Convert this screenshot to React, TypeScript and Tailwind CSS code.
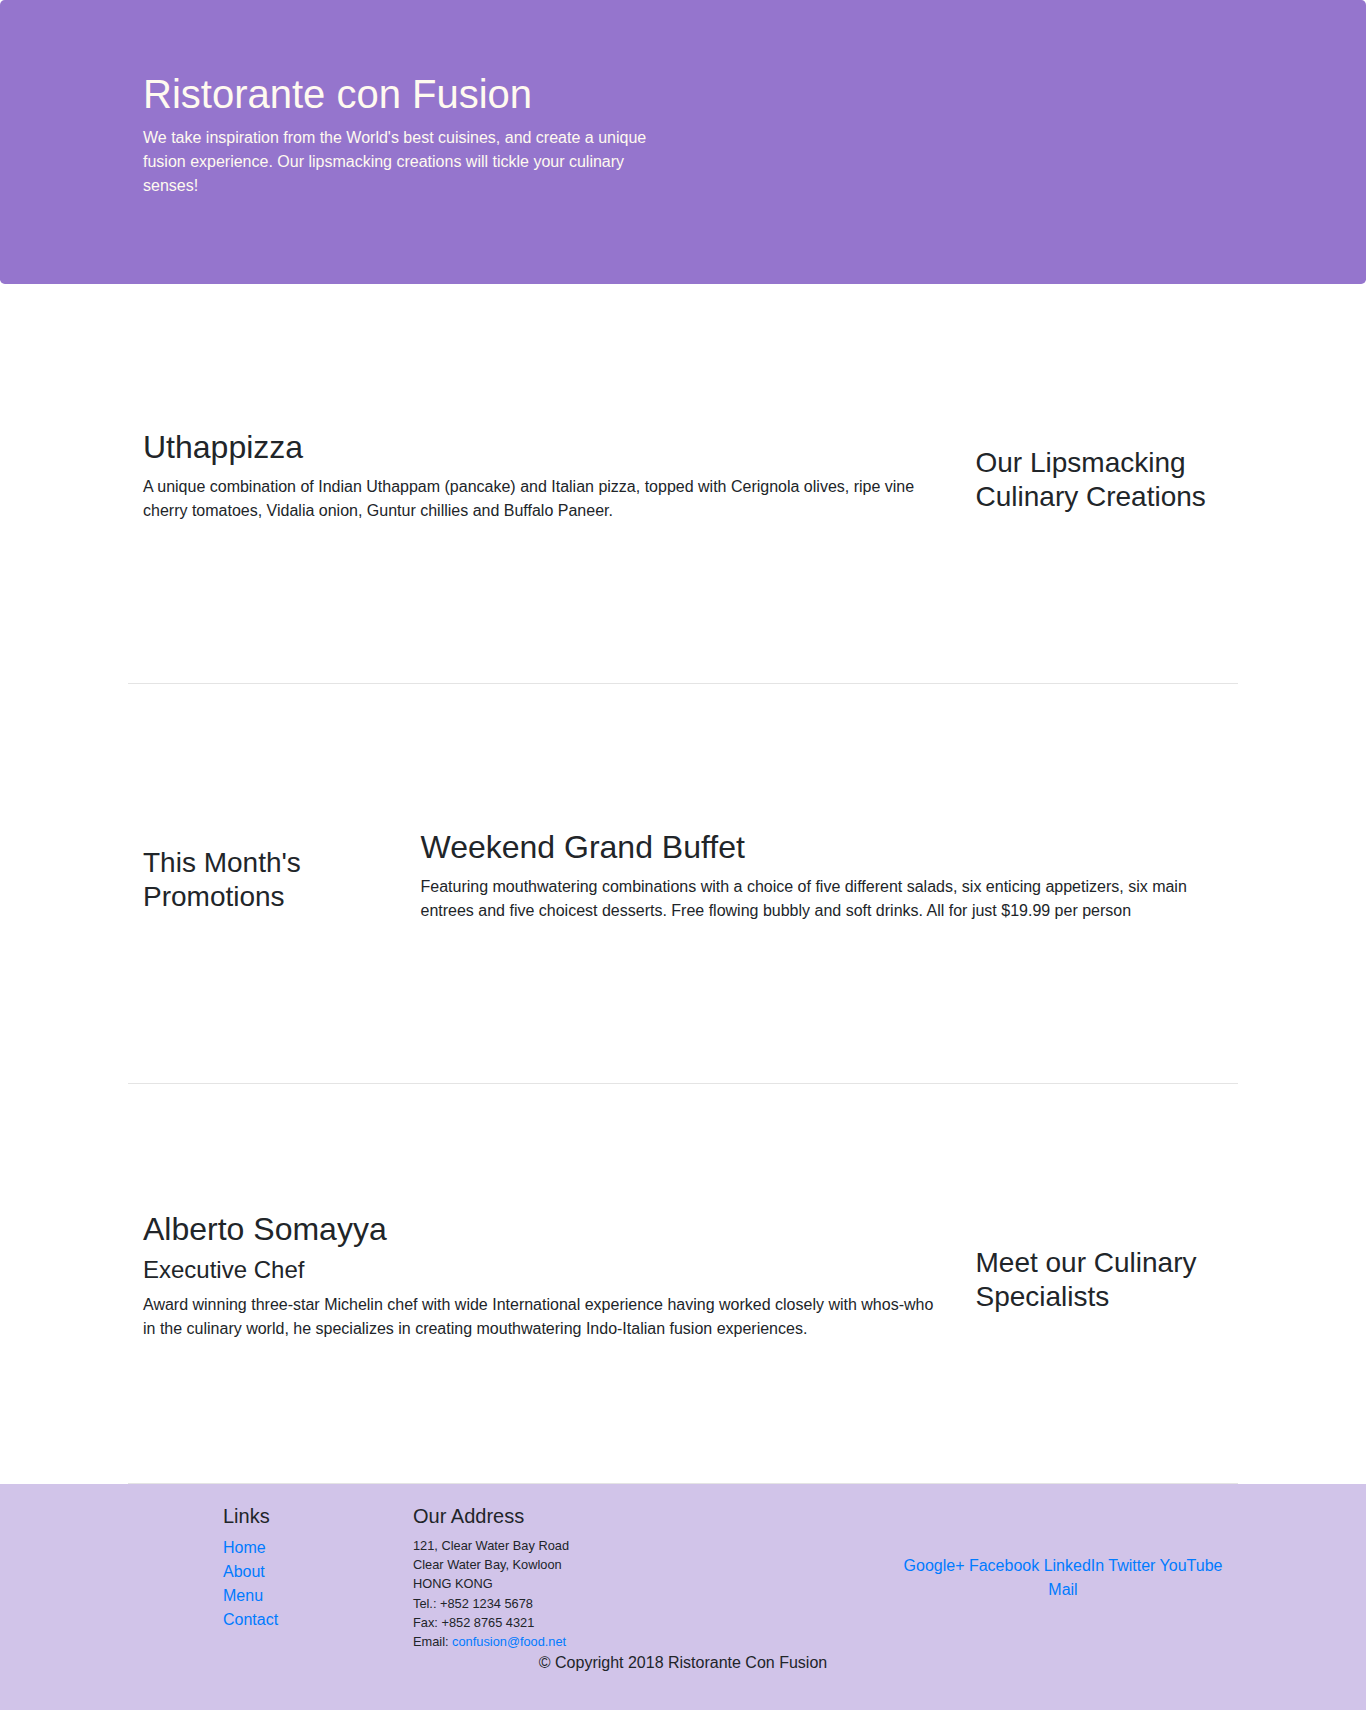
import React from "react";

export default function App() {
  return (
    <div className="font-[family-name:'Liberation_Sans',Arial,sans-serif] text-[#212529] text-[16px] leading-[24px] bg-white">
      <header className="bg-[#9575cd] text-[#fffaf0] rounded-[4.8px] pt-[70px] pb-[70px] px-[30px]">
        <div className="mx-auto w-[1140px] px-[15px]">
          <div className="flex">
            <div className="w-1/2 px-[15px]">
              <h1 className="text-[40px] leading-[1.2] font-normal mb-2">Ristorante con Fusion</h1>
              <p className="mb-4">
                We take inspiration from the World's best cuisines, and create a unique fusion experience. Our
                lipsmacking creations will tickle your culinary senses!
              </p>
            </div>
          </div>
        </div>
      </header>

      <main className="mx-auto w-[1140px] px-[15px]">
        <div className="flex items-center min-h-[400px] py-[50px] border-b border-[#e4e4e4]">
          <div className="flex-1 px-[15px]">
            <h2 className="text-[32px] leading-[1.2] font-normal mb-2">Uthappizza</h2>
            <p className="mb-4">
              A unique combination of Indian Uthappam (pancake) and Italian pizza, topped with Cerignola olives, ripe
              vine cherry tomatoes, Vidalia onion, Guntur chillies and Buffalo Paneer.
            </p>
          </div>
          <div className="w-[277.5px] shrink-0 px-[15px]">
            <h3 className="text-[28px] leading-[1.2] font-normal mb-2">Our Lipsmacking Culinary Creations</h3>
          </div>
        </div>

        <div className="flex items-center min-h-[400px] py-[50px] border-b border-[#e4e4e4]">
          <div className="w-[277.5px] shrink-0 px-[15px]">
            <h3 className="text-[28px] leading-[1.2] font-normal mb-2">This Month's Promotions</h3>
          </div>
          <div className="flex-1 px-[15px]">
            <h2 className="text-[32px] leading-[1.2] font-normal mb-2">Weekend Grand Buffet</h2>
            <p className="mb-4">
              Featuring mouthwatering combinations with a choice of five different salads, six enticing appetizers,
              six main entrees and five choicest desserts. Free flowing bubbly and soft drinks. All for just $19.99
              per person
            </p>
          </div>
        </div>

        <div className="flex items-center min-h-[400px] py-[50px] border-b border-[#e4e4e4]">
          <div className="flex-1 px-[15px]">
            <h2 className="text-[32px] leading-[1.2] font-normal mb-2">Alberto Somayya</h2>
            <h4 className="text-[24px] leading-[1.2] font-normal mb-2">Executive Chef</h4>
            <p className="mb-4">
              Award winning three-star Michelin chef with wide International experience having worked closely with
              whos-who in the culinary world, he specializes in creating mouthwatering Indo-Italian fusion
              experiences.
            </p>
          </div>
          <div className="w-[277.5px] shrink-0 px-[15px]">
            <h3 className="text-[28px] leading-[1.2] font-normal mb-2">Meet our Culinary Specialists</h3>
          </div>
        </div>
      </main>

      <footer className="bg-[#d1c4e9] py-5">
        <div className="mx-auto w-[1140px] px-[15px]">
          <div className="flex -mx-[15px]">
            <div className="ml-[95px] w-[190px] px-[15px]">
              <h5 className="text-[20px] leading-[1.2] font-normal mb-2">Links</h5>
              <ul>
                <li>
                  <a href="#" className="text-[#007bff]">Home</a>
                </li>
                <li>
                  <a href="#" className="text-[#007bff]">About</a>
                </li>
                <li>
                  <a href="#" className="text-[#007bff]">Menu</a>
                </li>
                <li>
                  <a href="#" className="text-[#007bff]">Contact</a>
                </li>
              </ul>
            </div>
            <div className="w-[475px] px-[15px]">
              <h5 className="text-[20px] leading-[1.2] font-normal mb-2">Our Address</h5>
              <address className="not-italic text-[12.8px] leading-[19.2px]">
                121, Clear Water Bay Road
                <br />
                Clear Water Bay, Kowloon
                <br />
                HONG KONG
                <br />
                Tel.: +852 1234 5678
                <br />
                Fax: +852 8765 4321
                <br />
                Email: <a href="#" className="text-[#007bff]">confusion@food.net</a>
              </address>
            </div>
            <div className="w-[380px] px-[15px] self-center text-center">
              <a href="#" className="text-[#007bff]">Google+</a>{" "}
              <a href="#" className="text-[#007bff]">Facebook</a>{" "}
              <a href="#" className="text-[#007bff]">LinkedIn</a>{" "}
              <a href="#" className="text-[#007bff]">Twitter</a>{" "}
              <a href="#" className="text-[#007bff]">YouTube</a>{" "}
              <a href="#" className="text-[#007bff]">Mail</a>
            </div>
          </div>
          <div className="flex justify-center">
            <div className="px-[15px]">
              <p className="mb-4">© Copyright 2018 Ristorante Con Fusion</p>
            </div>
          </div>
        </div>
      </footer>
    </div>
  );
}
